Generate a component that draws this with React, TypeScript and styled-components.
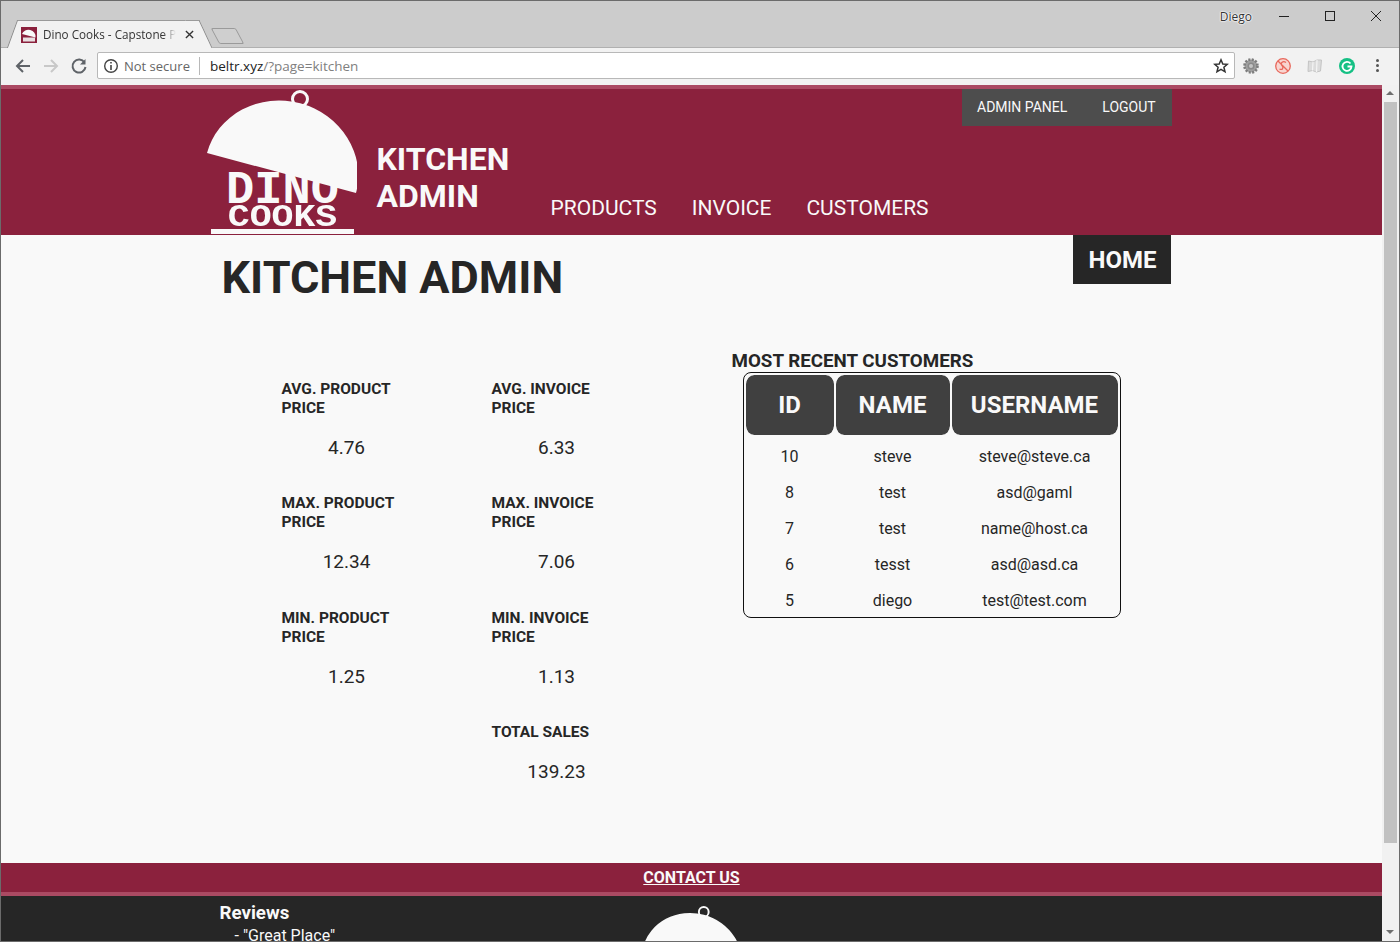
import styled, { createGlobalStyle } from 'styled-components';

const GlobalStyle = createGlobalStyle`
    html, body {
        margin: 0;
        padding: 0;
        height: 100%;
        overflow: hidden;
    }

    body {
        background: #f9f9f9;
        color: #262626;
        font-family: Roboto, 'Liberation Sans', sans-serif;
    }
`;

const stats = [
    [
        { label: 'AVG. PRODUCT PRICE', value: '4.76' },
        { label: 'MAX. PRODUCT PRICE', value: '12.34' },
        { label: 'MIN. PRODUCT PRICE', value: '1.25' },
    ],
    [
        { label: 'AVG. INVOICE PRICE', value: '6.33' },
        { label: 'MAX. INVOICE PRICE', value: '7.06' },
        { label: 'MIN. INVOICE PRICE', value: '1.13' },
        { label: 'TOTAL SALES', value: '139.23' },
    ],
];

const customers = [
    { id: 10, name: 'steve', username: 'steve@steve.ca' },
    { id: 8, name: 'test', username: 'asd@gaml' },
    { id: 7, name: 'test', username: 'name@host.ca' },
    { id: 6, name: 'tesst', username: 'asd@asd.ca' },
    { id: 5, name: 'diego', username: 'test@test.com' },
];

const Cloche = ({ width }: { width: number }): JSX.Element => (
    <svg width={width} height={width * 0.6933} viewBox="0 0 150 104" style={{ display: 'block' }}>
        <circle cx="93" cy="9" r="7.500" fill="none" stroke="#f9f9f9" strokeWidth="3" />
        <path d="M0 63 A77 72 14.700 0 1 149 103 Z" fill="#f9f9f9" />
    </svg>
);

const App = (): JSX.Element => {
    return (
        <Window>
            <GlobalStyle />
            <TitleBar>
                <Tab>
                    <Favicon viewBox="0 0 16 16">
                        <rect width="16" height="16" fill="#8b213d" />
                        <path d="M1 7 A7 6.500 14.700 0 1 14.500 10.500 Z" fill="#f9f9f9" />
                        <rect x="2" y="10.500" width="12" height="4" fill="#e8dfe1" />
                    </Favicon>
                    <TabTitle>Dino Cooks - Capstone Project</TabTitle>
                    <TabClose viewBox="0 0 10 10">
                        <path d="M1 1 L9 9 M9 1 L1 9" stroke="#333" strokeWidth="1.500" />
                    </TabClose>
                </Tab>
                <NewTab />
                <Profile>Diego</Profile>
                <WindowButton viewBox="0 0 46 20">
                    <path d="M18 10.500 H28" stroke="#222" strokeWidth="1" />
                </WindowButton>
                <WindowButton viewBox="0 0 46 20">
                    <rect x="18.500" y="5.500" width="9" height="9" fill="none" stroke="#222" strokeWidth="1" />
                </WindowButton>
                <WindowButton viewBox="0 0 46 20">
                    <path d="M18 5 L28 15 M28 5 L18 15" stroke="#222" strokeWidth="1" />
                </WindowButton>
            </TitleBar>
            <Toolbar>
                <NavIcon viewBox="0 0 18 18">
                    <path d="M16 9 H3 M9 3 L3 9 L9 15" fill="none" stroke="#5f6368" strokeWidth="2" />
                </NavIcon>
                <NavIcon viewBox="0 0 18 18">
                    <path d="M2 9 H15 M9 3 L15 9 L9 15" fill="none" stroke="#c8c8c8" strokeWidth="2" />
                </NavIcon>
                <NavIcon viewBox="0 0 18 18">
                    <path d="M14.500 5.500 A6.500 6.500 0 1 0 15.500 10" fill="none" stroke="#5f6368" strokeWidth="2" />
                    <path d="M15.500 2 V7.500 H10 Z" fill="#5f6368" />
                </NavIcon>
                <Omnibox>
                    <InfoIcon viewBox="0 0 16 16">
                        <circle cx="8" cy="8" r="6.300" fill="none" stroke="#444" strokeWidth="1.400" />
                        <path d="M8 7 V12 M8 4 V5.600" stroke="#444" strokeWidth="1.600" />
                    </InfoIcon>
                    <NotSecure>Not secure</NotSecure>
                    <Url>
                        beltr.xyz<UrlRest>/?page=kitchen</UrlRest>
                    </Url>
                    <StarIcon viewBox="0 0 16 16">
                        <path d="M8 1.800 L9.800 6 L14.300 6.300 L10.900 9.300 L12 13.800 L8 11.400 L4 13.800 L5.100 9.300 L1.700 6.300 L6.200 6 Z" fill="none" stroke="#333" strokeWidth="1.500" />
                    </StarIcon>
                </Omnibox>
                <Extensions>
                    <ExtensionIcon viewBox="0 0 18 18">
                        <circle cx="9" cy="9" r="6.500" fill="#a0a0a0" stroke="#7d7d7d" strokeWidth="2.600" strokeDasharray="2 1.400" />
                        <circle cx="9" cy="9" r="3.500" fill="#8a8a8a" />
                        <circle cx="9" cy="9" r="2" fill="#c4c4c4" />
                    </ExtensionIcon>
                    <ExtensionIcon viewBox="0 0 18 18">
                        <circle cx="9" cy="9" r="7.300" fill="#f8d5d0" stroke="#e8685c" strokeWidth="1.300" />
                        <path d="M12 5.500 C9 3.500 6 6 8 8.500 C10 10.500 8.500 13.500 5.500 12 M4 4 L14 14" fill="none" stroke="#e8685c" strokeWidth="1.300" />
                    </ExtensionIcon>
                    <ExtensionIcon viewBox="0 0 18 18">
                        <path d="M2.500 4 L7 5 L11 3 L15.500 3 L14.500 14 L10.500 15 L6.500 13.500 L2 14.500 Z" fill="#dcdcdc" stroke="#c4c4c4" strokeWidth="1" />
                        <path d="M7 5 L6.500 13.500 M11 3 L10.500 15" stroke="#f4f4f4" strokeWidth="1.200" />
                    </ExtensionIcon>
                    <ExtensionIcon viewBox="0 0 18 18">
                        <circle cx="9" cy="9" r="8" fill="#15c084" />
                        <path d="M12.500 6.500 A4.500 4.500 0 1 0 13.500 9.500 H9.500" fill="none" stroke="#fff" strokeWidth="1.800" />
                    </ExtensionIcon>
                    <MenuDots>
                        <span />
                        <span />
                        <span />
                    </MenuDots>
                </Extensions>
            </Toolbar>
            <Viewport>
                <Page>
                    <Header>
                        <HeaderInner>
                            <Logo>
                                <LogoDino>DINO</LogoDino>
                                <LogoCooks>COOKS</LogoCooks>
                                <LogoBase />
                                <LogoDome>
                                    <Cloche width={150} />
                                </LogoDome>
                            </Logo>
                            <SiteTitle>KITCHEN<br />ADMIN</SiteTitle>
                            <MainNav>
                                <NavLink>PRODUCTS</NavLink>
                                <NavLink>INVOICE</NavLink>
                                <NavLink>CUSTOMERS</NavLink>
                            </MainNav>
                            <AdminBar>
                                <AdminLink>ADMIN PANEL</AdminLink>
                                <AdminLink>LOGOUT</AdminLink>
                            </AdminBar>
                        </HeaderInner>
                    </Header>
                    <Main>
                        <TitleRow>
                            <Heading>KITCHEN ADMIN</Heading>
                            <HomeButton>HOME</HomeButton>
                        </TitleRow>
                        <Content>
                            <StatColumns>
                                {stats.map((column, index) => (
                                    <StatColumn key={index}>
                                        {column.map((stat) => (
                                            <Stat key={stat.label}>
                                                <StatLabel>{stat.label}</StatLabel>
                                                <StatValue>{stat.value}</StatValue>
                                            </Stat>
                                        ))}
                                    </StatColumn>
                                ))}
                            </StatColumns>
                            <Customers>
                                <CustomersTitle>MOST RECENT CUSTOMERS</CustomersTitle>
                                <TableFrame>
                                    <CustomersTable>
                                        <thead>
                                            <tr>
                                                <HeadCell $width={88}>ID</HeadCell>
                                                <HeadCell $width={114}>NAME</HeadCell>
                                                <HeadCell $width={166}>USERNAME</HeadCell>
                                            </tr>
                                        </thead>
                                        <tbody>
                                            {customers.map((customer) => (
                                                <tr key={customer.id}>
                                                    <BodyCell>{customer.id}</BodyCell>
                                                    <BodyCell>{customer.name}</BodyCell>
                                                    <BodyCell>{customer.username}</BodyCell>
                                                </tr>
                                            ))}
                                        </tbody>
                                    </CustomersTable>
                                </TableFrame>
                            </Customers>
                        </Content>
                    </Main>
                    <ContactBar>
                        <ContactLink>CONTACT US</ContactLink>
                    </ContactBar>
                    <Footer>
                        <FooterInner>
                            <Reviews>
                                <ReviewsTitle>Reviews</ReviewsTitle>
                                <ReviewItem>- "Great Place"</ReviewItem>
                            </Reviews>
                            <FooterLogo>
                                <Cloche width={98} />
                            </FooterLogo>
                        </FooterInner>
                    </Footer>
                </Page>
                <Scrollbar>
                    <ScrollArrow />
                    <ScrollTrack>
                        <ScrollThumb />
                    </ScrollTrack>
                    <ScrollArrow $down />
                </Scrollbar>
            </Viewport>
        </Window>
    );
};

const Window = styled.div`
    border: solid 1px #6b6b6b;
    box-sizing: border-box;
    display: flex;
    flex-direction: column;
    height: 942px;
    overflow: hidden;
    width: 1400px;
`;

const TitleBar = styled.div`
    align-items: flex-end;
    background: #cccccc;
    box-shadow: inset 0 -1px 0 #b0b0b0;
    display: flex;
    flex: 0 0 47px;
    padding-left: 16px;
    position: relative;
`;

const Tab = styled.div`
    align-items: center;
    background: #f2f2f2;
    border-top: solid 1px #9a9a9a;
    box-sizing: border-box;
    display: flex;
    height: 28px;
    padding: 0 6px 0 4px;
    position: relative;
    width: 183px;

    &::before, &::after {
        background: #f2f2f2;
        box-sizing: border-box;
        content: '';
        height: 28px;
        position: absolute;
        top: -1px;
        width: 14px;
    }

    &::before {
        border-left: solid 1px #8a8a8a;
        border-top: solid 1px #9a9a9a;
        left: -5px;
        transform: skewX(-20deg);
    }

    &::after {
        border-right: solid 1px #8a8a8a;
        border-top: solid 1px #9a9a9a;
        right: -6px;
        transform: skewX(25deg);
    }
`;

const Favicon = styled.svg`
    flex: none;
    height: 16px;
    position: relative;
    width: 16px;
    z-index: 1;
`;

const TabTitle = styled.span`
    color: #333;
    flex: 0 0 133px;
    font-family: 'Open Sans', sans-serif;
    font-size: 11.700px;
    margin: 0 0 2px 6px;
    mask-image: linear-gradient(to right, black 90%, transparent);
    overflow: hidden;
    position: relative;
    white-space: nowrap;
    z-index: 1;
`;

const TabClose = styled.svg`
    flex: none;
    height: 9px;
    margin-left: 9px;
    position: relative;
    width: 9px;
    z-index: 1;
`;

const NewTab = styled.div`
    background: #cfcfcf;
    border: solid 1px #9a9a9a;
    border-radius: 2px;
    height: 14px;
    margin: 0 auto 4px 15px;
    transform: skewX(28deg);
    width: 23px;
`;

const Profile = styled.div`
    align-self: flex-start;
    color: #333;
    font-family: 'Open Sans', sans-serif;
    font-size: 12px;
    margin: 7px 9px 0 0;
    text-shadow: 0 0 1px #fff, 0 0 1px #fff, 0 0 2px #fff, 0 0 2px #fff;
`;

const WindowButton = styled.svg`
    align-self: flex-start;
    height: 20px;
    margin-top: 5px;
    width: 46px;
`;

const Toolbar = styled.div`
    align-items: center;
    background: #f2f2f2;
    display: flex;
    flex: 0 0 35px;
    gap: 10px;
    padding: 0 0 2px 13px;
`;

const NavIcon = styled.svg`
    flex: none;
    height: 18px;
    width: 18px;
`;

const Omnibox = styled.div`
    align-items: center;
    background: #fff;
    border: solid 1px #b8b8b8;
    border-radius: 2px;
    box-sizing: border-box;
    display: flex;
    flex: 0 0 1138px;
    height: 27px;
    margin-left: -1px;
    padding: 0 5px;
`;

const InfoIcon = styled.svg`
    flex: none;
    height: 16px;
    width: 16px;
`;

const NotSecure = styled.span`
    border-right: solid 1px #b8b8b8;
    color: #666;
    font-family: 'Open Sans', sans-serif;
    font-size: 13px;
    margin-left: 5px;
    padding-right: 9px;
`;

const Url = styled.span`
    color: #222;
    flex: 1;
    font-family: 'Open Sans', sans-serif;
    font-size: 13.500px;
    margin-left: 10px;
`;

const UrlRest = styled.span`
    color: #808080;
`;

const StarIcon = styled.svg`
    flex: none;
    height: 16px;
    width: 16px;
`;

const Extensions = styled.div`
    align-items: center;
    display: flex;
    gap: 14px;
    margin-left: -3px;
`;

const ExtensionIcon = styled.svg`
    flex: none;
    height: 18px;
    width: 18px;
`;

const MenuDots = styled.div`
    display: flex;
    flex-direction: column;
    gap: 2px;
    margin-left: 6px;

    span {
        background: #555;
        border-radius: 50%;
        display: block;
        height: 3px;
        width: 3px;
    }
`;

const Viewport = styled.div`
    display: flex;
    flex: 1;
    min-height: 0;
`;

const Page = styled.div`
    display: flex;
    flex: 1;
    flex-direction: column;
    min-width: 0;
`;

const Header = styled.header`
    background: #8b213d;
    border-top: solid 4px #ab4a63;
    flex: 0 0 146px;
`;

const HeaderInner = styled.div`
    align-items: flex-end;
    display: flex;
    height: 100%;
    margin: 0 auto;
    position: relative;
    width: 980px;
`;

const Logo = styled.div`
    align-items: center;
    align-self: stretch;
    display: flex;
    flex: 0 0 150px;
    flex-direction: column;
    justify-content: flex-end;
    margin-left: 5px;
    position: relative;
`;

const LogoDino = styled.div`
    color: #f9f9f9;
    font-family: 'Liberation Mono', monospace;
    font-size: 47px;
    font-weight: 700;
    height: 30px;
    line-height: 30px;
    margin: 0 0 -1px 2px;
`;

const LogoCooks = styled.div`
    color: #f9f9f9;
    font-family: 'Liberation Mono', monospace;
    font-size: 36.500px;
    font-weight: 700;
    height: 23px;
    line-height: 23px;
    margin: 0 0 1px 2px;
    transform: scaleY(0.88);
    transform-origin: center bottom;
`;

const LogoBase = styled.div`
    align-self: flex-start;
    background: #f9f9f9;
    flex: none;
    height: 5px;
    margin: 0 0 1px 4px;
    width: 143px;
`;

const LogoDome = styled.div`
    left: 0;
    position: absolute;
    top: 1px;
`;

const SiteTitle = styled.div`
    color: #f9f9f9;
    font-size: 32px;
    font-weight: 700;
    line-height: 37px;
    margin: 0 0 20px 20px;
    width: 174px;
`;

const MainNav = styled.nav`
    display: flex;
    gap: 35px;
    margin-bottom: 13px;
`;

const NavLink = styled.a`
    color: #f9f9f9;
    font-size: 21px;
    line-height: 28px;
`;

const AdminBar = styled.div`
    background: #4d4d4d;
    display: flex;
    gap: 35px;
    height: 37px;
    left: 760px;
    line-height: 37px;
    padding: 0 16px 0 15.500px;
    position: absolute;
    top: 0;
`;

const AdminLink = styled.a`
    color: #f9f9f9;
    font-size: 14px;
`;

const Main = styled.main`
    box-sizing: border-box;
    flex: 1;
    margin: 0 auto;
    min-height: 0;
    padding-left: 20px;
    width: 980px;
`;

const TitleRow = styled.div`
    align-items: flex-start;
    display: flex;
    justify-content: space-between;
    padding-right: 11px;
`;

const Heading = styled.h1`
    font-size: 45px;
    font-weight: 700;
    line-height: 52px;
    margin: 17px 0 0;
`;

const HomeButton = styled.a`
    background: #262626;
    color: #f9f9f9;
    font-size: 24px;
    font-weight: 700;
    height: 49px;
    line-height: 51px;
    padding: 0 14px 0 15px;
`;

const Content = styled.div`
    display: flex;
    margin-top: 45px;
`;

const StatColumns = styled.div`
    box-sizing: border-box;
    display: flex;
    flex: 0 0 510px;
    padding: 31px 0 0 60px;
`;

const StatColumn = styled.div`
    display: flex;
    flex: 0 0 210px;
    flex-direction: column;
`;

const Stat = styled.div`
    height: 114.400px;
    width: 130px;
`;

const StatLabel = styled.div`
    font-size: 15.500px;
    font-weight: 700;
    line-height: 19px;
    width: 120px;
`;

const StatValue = styled.div`
    font-size: 19px;
    line-height: 24px;
    margin-top: 18px;
    text-align: center;
`;

const Customers = styled.section`
    display: flex;
    flex-direction: column;
    padding-top: 1px;
`;

const CustomersTitle = styled.div`
    font-size: 18.750px;
    font-weight: 700;
    line-height: 22px;
`;

const TableFrame = styled.div`
    background: #f9f9f9;
    border: solid 1px #111;
    border-radius: 8px;
    box-sizing: border-box;
    margin-left: 11px;
    padding: 2px 1px 0;
    width: 378px;
`;

const CustomersTable = styled.table`
    border-collapse: separate;
    border-spacing: 0;
    margin-bottom: -1px;
    table-layout: fixed;
    width: 374px;
`;

const HeadCell = styled.th<{ $width: number }>`
    background: #404040;
    background-clip: padding-box;
    border-left: solid 1px #f9f9f9;
    border-right: solid 1px #f9f9f9;
    border-radius: 9px;
    color: #f9f9f9;
    font-size: 24px;
    font-weight: 700;
    height: 60px;
    padding: 0;
    width: ${(props) => props.$width}px;
`;

const BodyCell = styled.td`
    font-size: 16px;
    height: 36px;
    padding: 0;
    text-align: center;

    tr:first-child > & {
        padding-top: 3px;
    }
`;

const ContactBar = styled.div`
    background: #8b213d;
    border-bottom: solid 4px #ab4a63;
    flex: 0 0 29px;
    line-height: 29px;
    text-align: center;
`;

const ContactLink = styled.a`
    color: #f9f9f9;
    font-size: 16px;
    font-weight: 700;
    text-decoration: underline;
`;

const Footer = styled.footer`
    background: #262626;
    color: #f9f9f9;
    flex: 0 0 45px;
    overflow: hidden;
`;

const FooterInner = styled.div`
    display: flex;
    margin: 0 auto;
    width: 980px;
`;

const Reviews = styled.div`
    flex: 0 0 423px;
    padding: 5px 0 0 18px;
`;

const ReviewsTitle = styled.div`
    font-size: 18.700px;
    font-weight: 700;
    line-height: 24px;
`;

const ReviewItem = styled.div`
    font-size: 16px;
    line-height: 22px;
    padding-left: 15px;
`;

const FooterLogo = styled.div`
    padding-top: 10px;
`;

const Scrollbar = styled.div`
    background: #f1f1f1;
    display: flex;
    flex: 0 0 17px;
    flex-direction: column;
`;

const ScrollArrow = styled.div<{ $down?: boolean }>`
    flex: 0 0 17px;
    position: relative;

    &::after {
        border-left: solid 4px transparent;
        border-right: solid 4px transparent;
        ${(props) => props.$down ? 'border-top' : 'border-bottom'}: solid 4px #6e6e6e;
        content: '';
        left: 4px;
        position: absolute;
        top: 6px;
    }
`;

const ScrollTrack = styled.div`
    flex: 1;
`;

const ScrollThumb = styled.div`
    background: #c1c1c1;
    height: 741px;
    margin: 0 2px;
`;

export default App;
